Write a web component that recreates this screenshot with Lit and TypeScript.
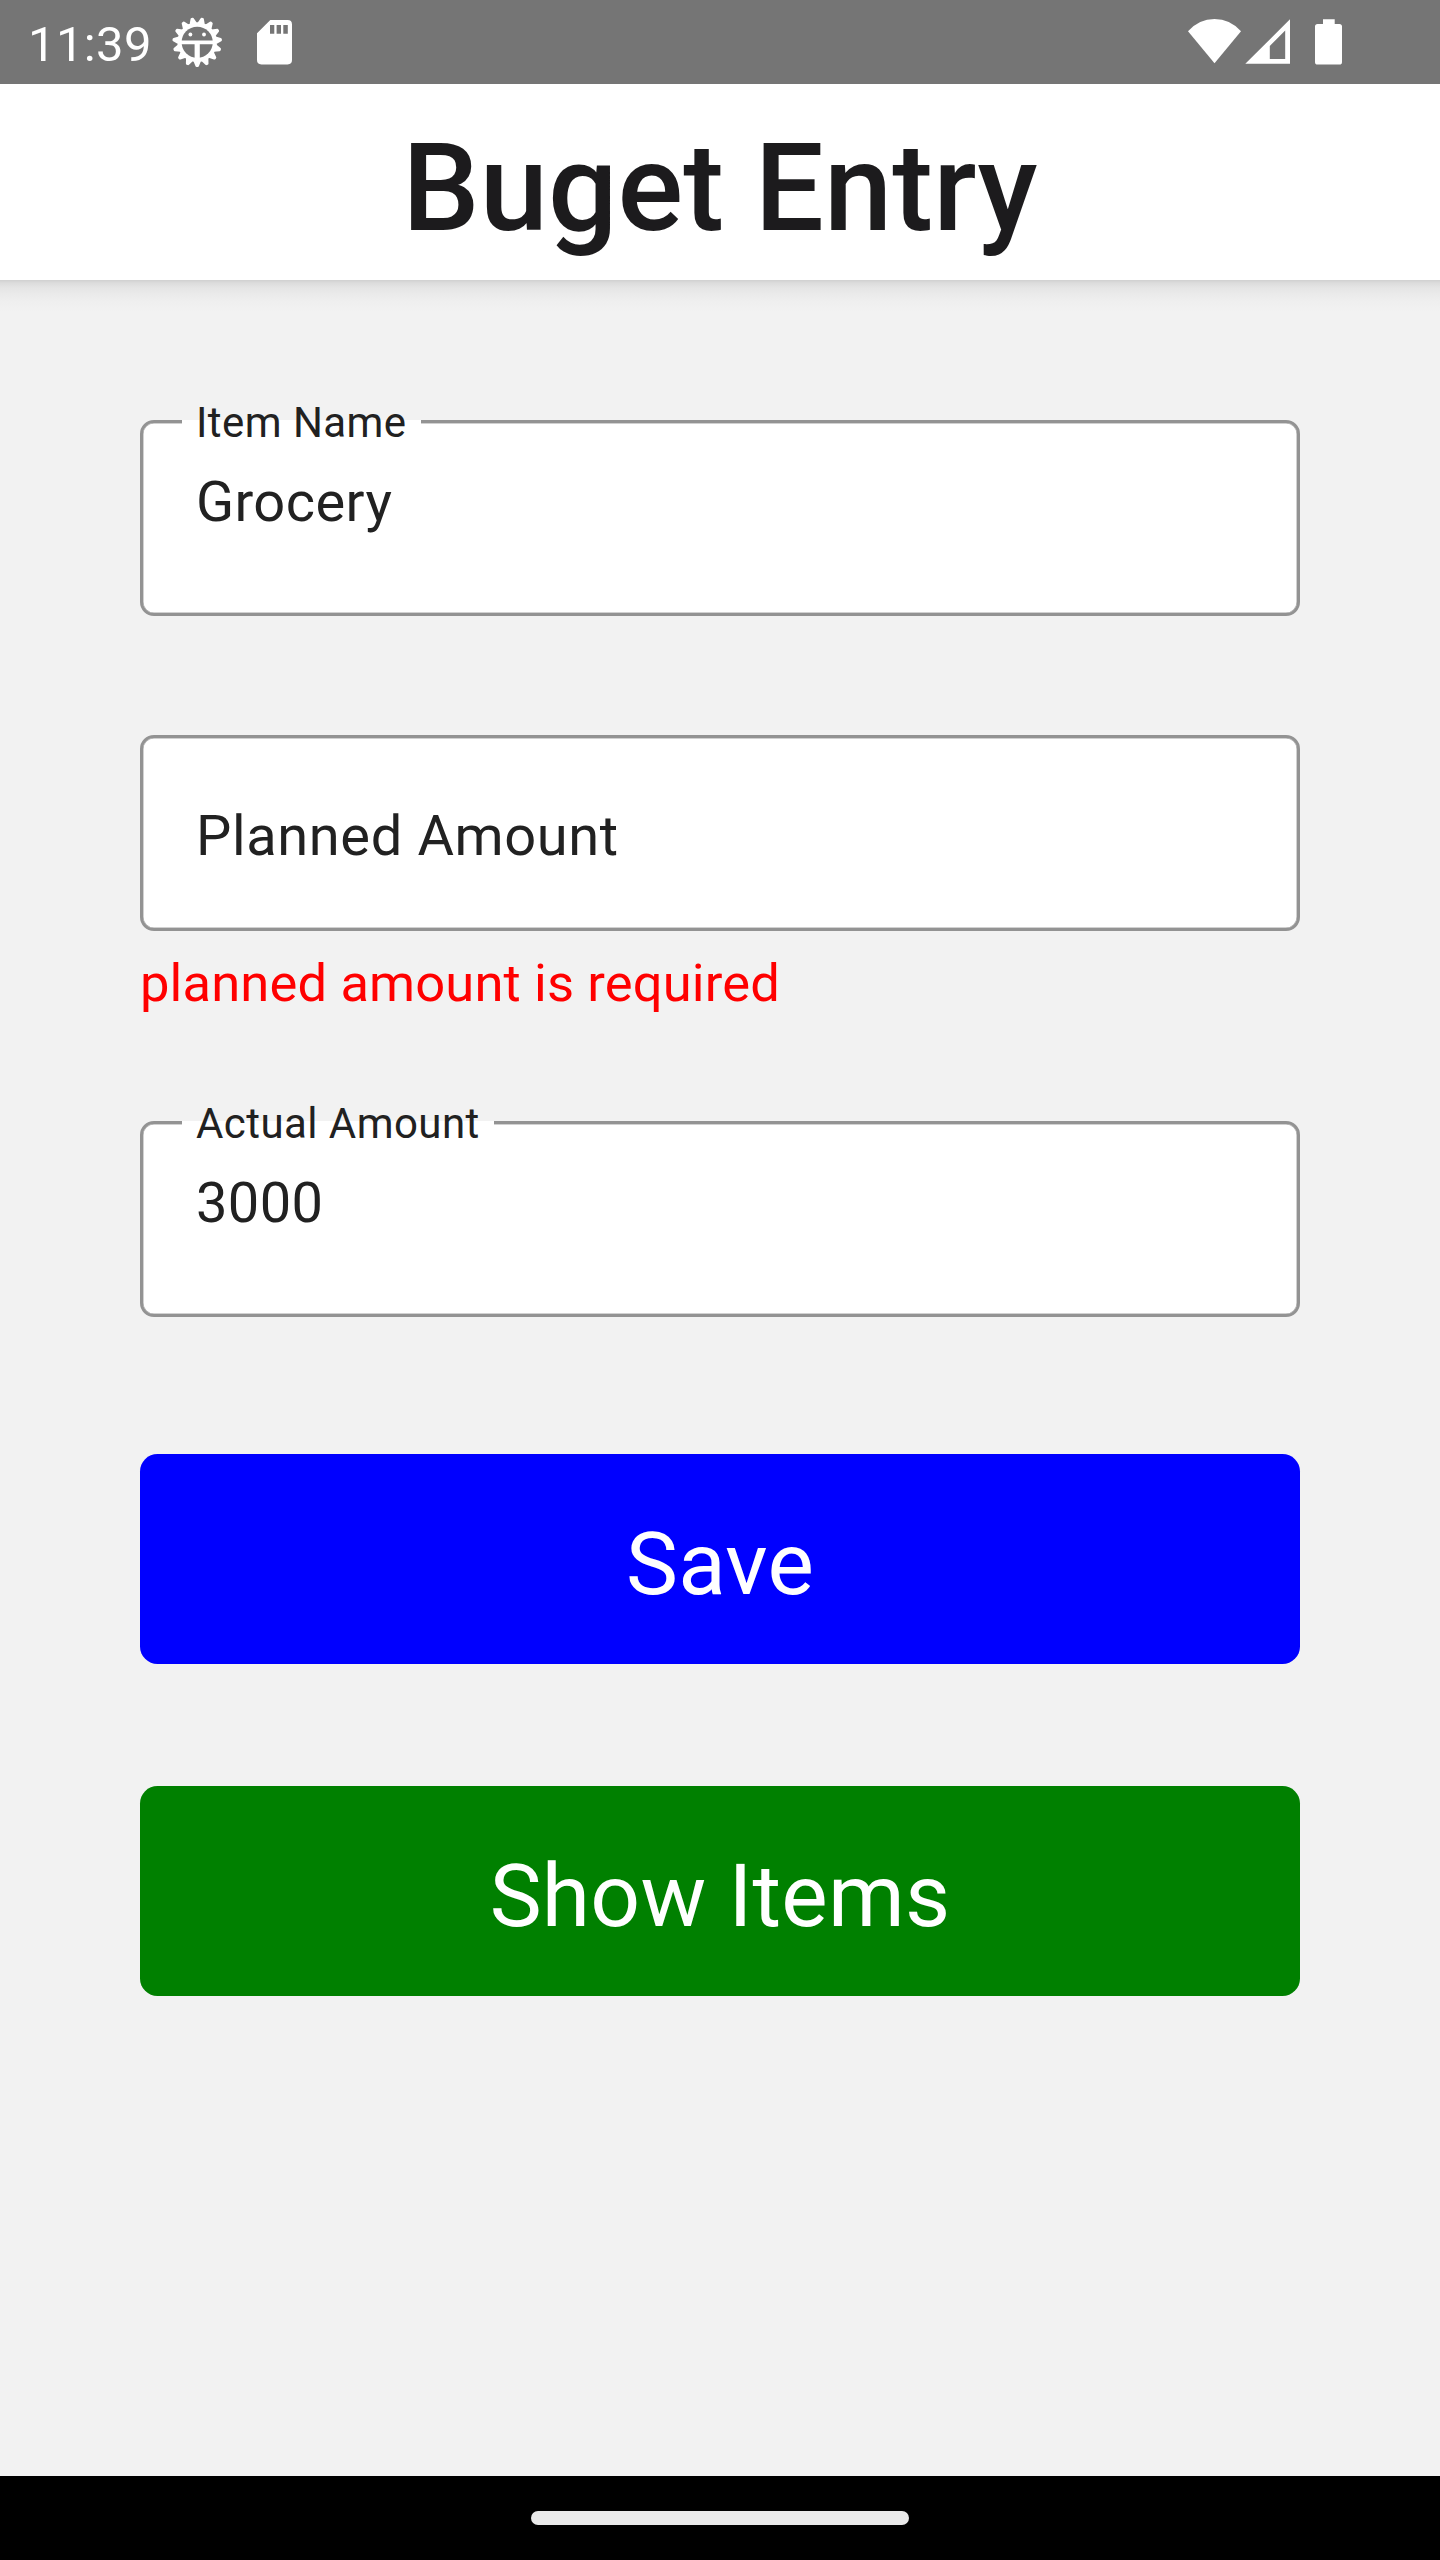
import { LitElement, html, css, nothing } from "lit";
import { customElement, property } from "lit/decorators.js";

const TEETH = 15;

function gearOutline(cx: number, cy: number, tip: number, root: number): string {
  const point = (r: number, deg: number) => {
    const a = (deg * Math.PI) / 180;
    return `${(cx + r * Math.sin(a)).toFixed(2)},${(cy - r * Math.cos(a)).toFixed(2)}`;
  };
  const points: string[] = [];
  for (let i = 0; i < TEETH; i++) {
    const deg = 180 + (i * 360) / TEETH;
    points.push(point(root, deg - 8), point(tip, deg - 1.2), point(tip, deg + 1.2), point(root, deg + 8));
  }
  return points.join(" ");
}

@customElement("status-bar")
export class StatusBar extends LitElement {
  static styles = css`
    :host {
      display: flex;
      justify-content: space-between;
      box-sizing: border-box;
      height: 84px;
      background: #757575;
      color: #fff;
      font-family: Roboto, sans-serif;
    }
    .left,
    .right {
      display: flex;
    }
    .left {
      padding-left: 28px;
    }
    .time {
      width: 137px;
      padding-top: 16px;
      font-size: 49px;
      line-height: 57px;
      letter-spacing: 0.35px;
      white-space: nowrap;
    }
    svg {
      display: block;
    }
  `;

  render() {
    return html`
      <div class="left">
        <div class="time">11:39</div>
        <svg width="64" height="84" viewBox="165 0 64 84">
          <polygon points=${gearOutline(197.2, 42.2, 23.5, 18.6)} fill="#fff" stroke="#fff" stroke-width="2.6" stroke-linejoin="round" />
          <circle cx="197.2" cy="42.3" r="15.6" fill="#757575" />
          <path d="M181 40.4h32v3.8h-13.2v15h-5.2v-15H181z" fill="#fff" />
          <circle cx="190.4" cy="34.5" r="1.9" fill="#fff" />
          <circle cx="204" cy="34.5" r="1.9" fill="#fff" />
        </svg>
        <svg width="71" height="84" viewBox="229 0 71 84">
          <path
            fill="#fff"
            fill-rule="evenodd"
            d="M270.3 20H287.6Q292 20 292 24.4V60Q292 64.4 287.6 64.4H261.4Q257 64.4 257 60V33.3ZM270 25V33.7H274.3V25ZM276.6 25V33.7H281V25ZM283.3 25V33.7H287.8V25Z"
          />
        </svg>
      </div>
      <div class="right">
        <svg width="280" height="84" viewBox="1160 0 280 84">
          <path d="M1214.5 63.3 1188 31.2Q1199 19 1214.5 19T1241 31.2Z" fill="#fff" />
          <path fill="#fff" fill-rule="evenodd" d="M1290 19.3V63.7H1245.3ZM1285.2 30.6 1269.8 46V59H1285.2Z" />
          <path
            fill="#fff"
            d="M1323 19.2H1334.7V24H1339.4Q1342 24 1342 26.6V62Q1342 64.6 1339.4 64.6H1317.6Q1315 64.6 1315 62V26.6Q1315 24 1317.6 24H1323Z"
          />
        </svg>
      </div>
    `;
  }
}

@customElement("outlined-field")
export class OutlinedField extends LitElement {
  @property() label = "";
  @property() value = "";

  static styles = css`
    :host {
      display: block;
      font-family: Roboto, sans-serif;
      color: #212121;
    }
    .box {
      box-sizing: border-box;
      display: flex;
      flex-direction: column;
      align-items: flex-start;
      height: 196px;
      border: 3px solid #939393;
      border-radius: 14px;
      background: #fff;
      box-shadow: inset 0 0 0 0.5px #a4a4a4;
      white-space: nowrap;
    }
    .label {
      margin: -25px 0 0 39px;
      padding: 0 14px;
      font-size: 42px;
      line-height: 49px;
      letter-spacing: 0.44px;
      background: linear-gradient(transparent 22px, #fff 22px);
    }
    .value {
      margin: 22px 0 0 53px;
      font-size: 56px;
      line-height: 66px;
      letter-spacing: 0.4px;
    }
    .placeholder {
      margin: 65px 0 0 53px;
      font-size: 56px;
      line-height: 66px;
      letter-spacing: 0.62px;
    }
  `;

  render() {
    return html`
      <div class="box">
        ${this.value
          ? html`<div class="label">${this.label}</div>
              <div class="value">${this.value}</div>`
          : this.label
            ? html`<div class="placeholder">${this.label}</div>`
            : nothing}
      </div>
    `;
  }
}

@customElement("app-root")
export class AppRoot extends LitElement {
  static styles = css`
    :host {
      display: flex;
      flex-direction: column;
      width: 1440px;
      height: 2560px;
      overflow: hidden;
      background: #f2f2f2;
      font-family: Roboto, sans-serif;
    }
    .header {
      box-sizing: border-box;
      height: 196px;
      padding-top: 32px;
      background: #fff;
      color: #1c1b1d;
      text-align: center;
    }
    .title {
      margin: 0;
      font-size: 122.5px;
      font-weight: 500;
      line-height: 144px;
      letter-spacing: 0.1px;
    }
    .content {
      flex: 1;
      display: flex;
      flex-direction: column;
      padding: 140px 140px 0;
      background: linear-gradient(#d0d0d0 0, #dcdcdc 3px, #e5e5e5 8px, #ebebeb 15px, #efefef 22px, #f2f2f2 32px);
    }
    .planned {
      margin-top: 119px;
    }
    .error {
      margin-top: 21px;
      height: 62px;
      font-size: 52.5px;
      line-height: 62px;
      letter-spacing: 0.14px;
      color: #f00;
    }
    .actual {
      margin-top: 107px;
    }
    .button {
      box-sizing: border-box;
      height: 210px;
      padding: 59px 0 0;
      border: 0;
      border-radius: 17.5px;
      color: #fff;
      font-size: 87.5px;
      line-height: 102px;
      letter-spacing: 0.25px;
      text-align: center;
    }
    .save {
      margin-top: 137px;
      background: #00f;
    }
    .show {
      margin-top: 122px;
      background: #008000;
    }
    .navigation {
      display: flex;
      justify-content: center;
      align-items: center;
      height: 84px;
      background: #000;
    }
    .handle {
      width: 378px;
      height: 14px;
      border-radius: 7px;
      background: #eaeaea;
    }
  `;

  render() {
    return html`
      <status-bar></status-bar>
      <header class="header"><h1 class="title">Buget Entry</h1></header>
      <main class="content">
        <outlined-field label="Item Name" value="Grocery"></outlined-field>
        <outlined-field class="planned" label="Planned Amount"></outlined-field>
        <div class="error">planned amount is required</div>
        <outlined-field class="actual" label="Actual Amount" value="3000"></outlined-field>
        <div class="button save" role="button">Save</div>
        <div class="button show" role="button">Show Items</div>
      </main>
      <div class="navigation"><div class="handle"></div></div>
    `;
  }
}
